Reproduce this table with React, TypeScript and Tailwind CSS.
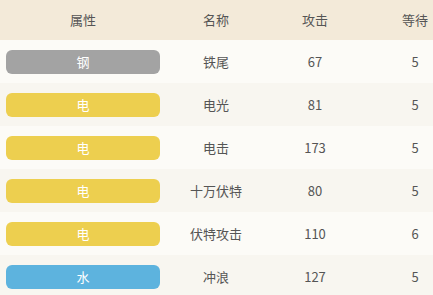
import React from 'react';

type Move = { type: string; name: string; power: number; wait: number };

const moves: Move[] = [
  { type: '钢', name: '铁尾', power: 67, wait: 5 },
  { type: '电', name: '电光', power: 81, wait: 5 },
  { type: '电', name: '电击', power: 173, wait: 5 },
  { type: '电', name: '十万伏特', power: 80, wait: 5 },
  { type: '电', name: '伏特攻击', power: 110, wait: 6 },
  { type: '水', name: '冲浪', power: 127, wait: 5 },
];

const typeColor: Record<string, string> = {
  钢: 'bg-[#a3a3a3]',
  电: 'bg-[#edcf4f]',
  水: 'bg-[#5db3de]',
};

const cols = 'grid grid-cols-[166px_100px_98px_102px] items-center';

export default function App() {
  return (
    <div
      className="w-[433px] h-[295px] overflow-hidden bg-[#fcfbf7] text-[13px] text-[#555555]"
      style={{ fontFamily: '"Noto Sans CJK SC", "Liberation Sans", sans-serif' }}
    >
      <div className="w-[466px]">
        {/* header */}
        <div className={`${cols} h-[40px] bg-[#f3ead9]`}>
          <div className="text-center">属性</div>
          <div className="text-center">名称</div>
          <div className="text-center">攻击</div>
          <div className="text-center">等待</div>
        </div>

        {moves.map((m, i) => (
          <div
            key={i}
            className={`${cols} h-[43px] ${i % 2 === 0 ? 'bg-[#fcfbf7]' : 'bg-[#f8f6f0]'}`}
          >
            <div className="pl-[6px] pr-[6px]">
              <div className={`h-[24px] rounded-[6px] flex items-center justify-center text-white ${typeColor[m.type]}`}>
                {m.type}
              </div>
            </div>
            <div className="text-center">{m.name}</div>
            <div className="text-center">{m.power}</div>
            <div className="text-center">{m.wait}</div>
          </div>
        ))}
      </div>
    </div>
  );
}
